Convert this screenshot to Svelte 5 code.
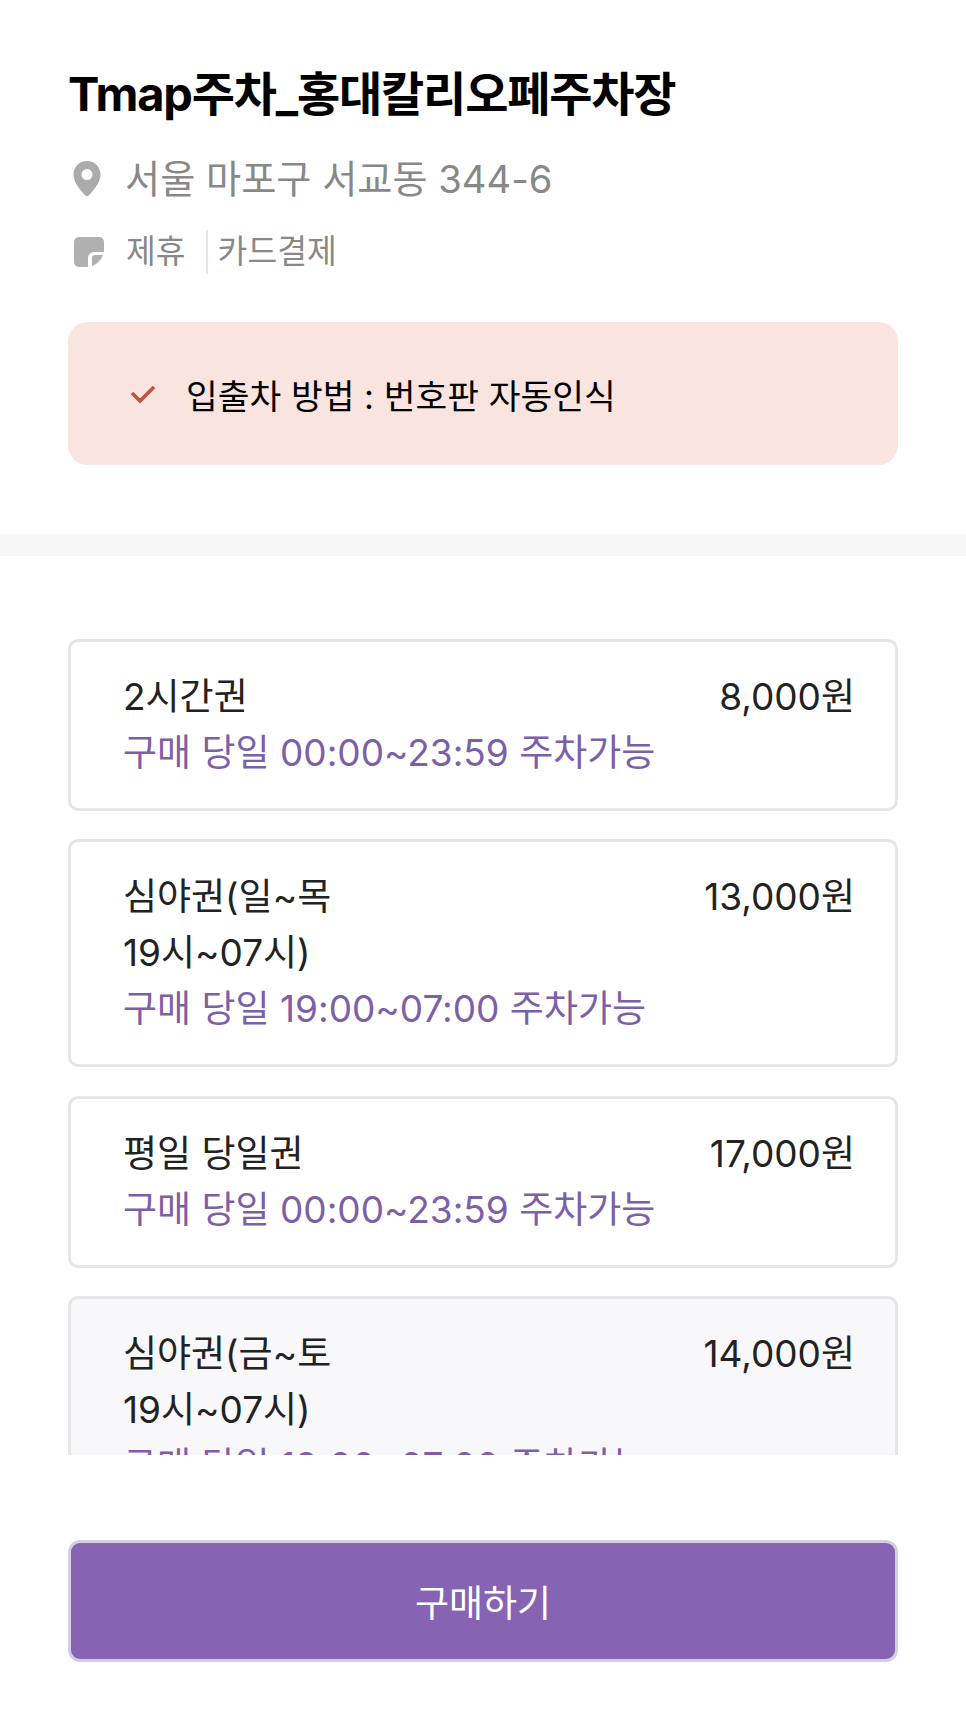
<script>
  let tickets = [
    { name: "2시간권", price: "8,000원", note: "구매 당일 00:00~23:59 주차가능" },
    { name: "심야권(일~목 19시~07시)", price: "13,000원", note: "구매 당일 19:00~07:00 주차가능" },
    { name: "평일 당일권", price: "17,000원", note: "구매 당일 00:00~23:59 주차가능" },
    { name: "심야권(금~토 19시~07시)", price: "14,000원", note: "구매 당일 19:00~07:00 주차가능", selected: true },
  ];
</script>

<div class="page">
  <section class="info">
    <h1 class="title">Tmap주차_홍대칼리오페주차장</h1>
    <div class="address">
      <svg class="pin" viewBox="0 0 30 38" width="30" height="38">
        <path fill-rule="evenodd" fill="#ababab" d="M15 1C7.3 1 1.5 7 1.5 14.5 1.5 23 10 32 13.4 35.6c.9.9 2.3.9 3.2 0C20 32 28.5 23 28.5 14.5 28.5 7 22.700 1 15 1zm0 8a5.500 5.500 0 1 1 0 11 5.500 5.500 0 0 1 0-11z" />
      </svg>
      <span>서울 마포구 서교동 344-6</span>
    </div>
    <div class="tags">
      <svg class="note" viewBox="0 0 30 30" width="30" height="30">
        <path fill="#b0b0b0" d="M5 0h20a5 5 0 0 1 5 5v10H20a6 6 0 0 0-6 6v9H5a5 5 0 0 1-5-5V5a5 5 0 0 1 5-5z" />
        <path fill="#b0b0b0" d="M18 29v-8a3 3 0 0 1 3-3h8c-1 4-7 10-11 11z" />
      </svg>
      <span class="tag">제휴</span>
      <span class="tag second">카드결제</span>
    </div>
    <div class="notice">
      <svg viewBox="0 0 26 20" width="26" height="20">
        <path d="M2 9l8 8L24 3" fill="none" stroke="#c0523f" stroke-width="3.500" />
      </svg>
      <span>입출차 방법 : 번호판 자동인식</span>
    </div>
  </section>

  <div class="band"></div>

  <div class="list">
    {#each tickets as t}
      <div class="card" class:selected={t.selected}>
        <div class="row">
          <div class="name">{t.name}</div>
          <div class="price">{t.price}</div>
        </div>
        <div class="when">{t.note}</div>
      </div>
    {/each}
  </div>

  <div class="footer">
    <button class="buy">구매하기</button>
  </div>
</div>

<style>
  :global(body) {
    margin: 0;
    background: #fff;
  }
  .page {
    width: 966px;
    height: 1732px;
    overflow: hidden;
    font-family: Inter, "Noto Sans CJK KR", sans-serif;
    color: #222;
  }
  .info {
    padding: 64px 68px 69px;
  }
  .title {
    margin: 0;
    font-size: 47px;
    line-height: 60px;
    font-weight: 700;
    letter-spacing: -1.200px;
    color: #000;
  }
  .address {
    display: flex;
    align-items: center;
    gap: 23px;
    margin-top: 29px;
    padding-left: 4px;
    font-size: 38.200px;
    line-height: 52px;
    color: #888;
  }
  .tags {
    display: flex;
    align-items: center;
    margin-top: 25px;
    padding-left: 6px;
    font-size: 32.400px;
    line-height: 44px;
    color: #888;
  }
  .note {
    margin-right: 22px;
  }
  .tag.second {
    margin-left: 20px;
    padding-left: 10px;
    border-left: 2px solid #e6e6e6;
  }
  .notice {
    display: flex;
    align-items: center;
    gap: 30px;
    margin-top: 48px;
    height: 143px;
    padding-left: 62px;
    border-radius: 20px;
    background: #f9e4df;
    font-size: 34.500px;
    color: #000;
  }
  .band {
    height: 22px;
    background: #f7f7f9;
  }
  .list {
    display: flex;
    flex-direction: column;
    gap: 28.400px;
    height: 816px;
    margin: 83px 68px 0;
    overflow: hidden;
  }
  .card {
    flex: none;
    padding: 27px 40px 27px 52px;
    border: 3px solid #e6e6ea;
    border-radius: 10px;
    background: #fff;
    font-size: 37px;
    line-height: 56px;
  }
  .card.selected {
    background: #f8f8fa;
  }
  .row {
    display: flex;
    justify-content: space-between;
  }
  .name {
    width: 260px;
    word-break: keep-all;
  }
  .when {
    color: #7d5fa8;
  }
  .footer {
    margin: 85px 68px 0;
  }
  .buy {
    display: block;
    width: 100%;
    height: 122px;
    border: 3px solid #d5cde2;
    border-radius: 12px;
    background: #8663b3;
    color: #fff;
    font: inherit;
    font-size: 37px;
  }
</style>
